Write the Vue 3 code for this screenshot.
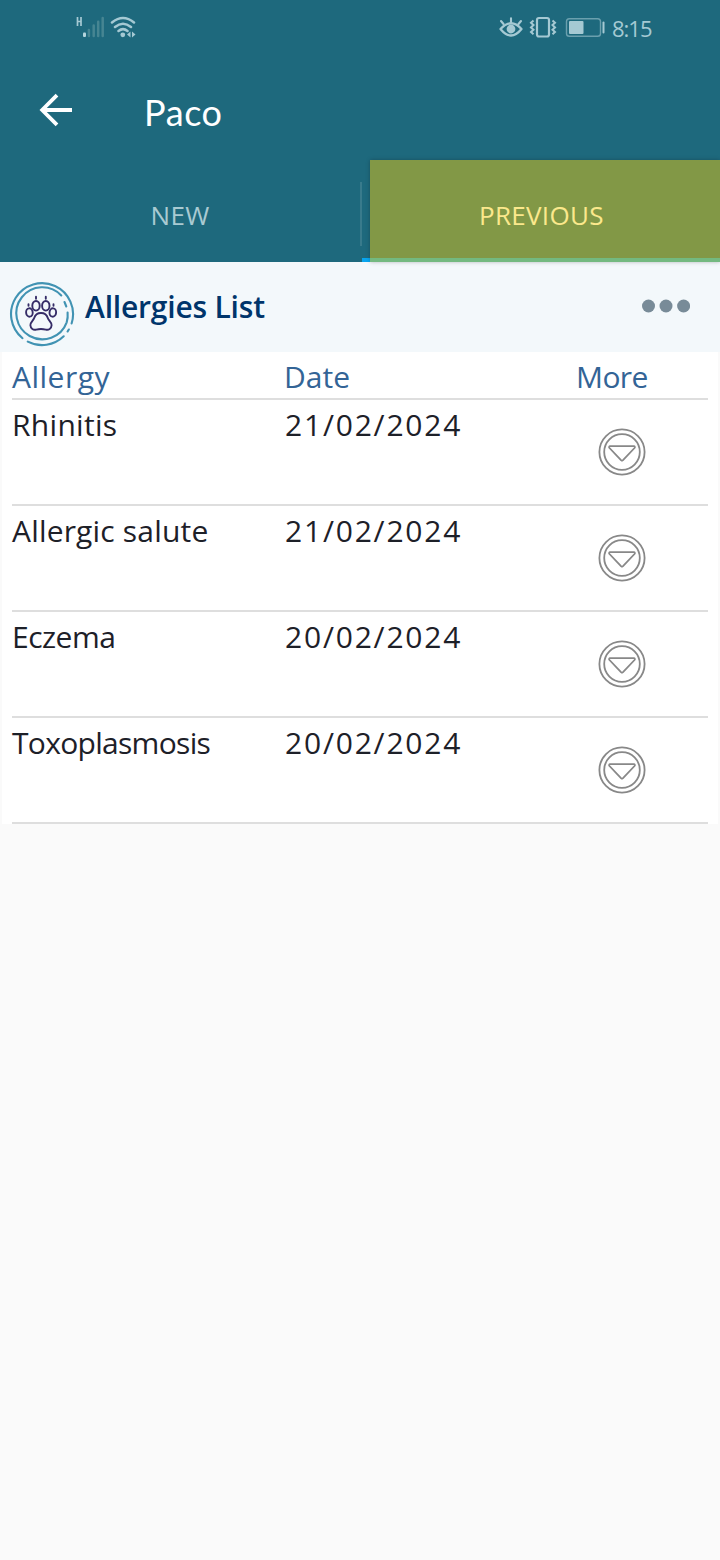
<script setup>
const rows = [
  { name: 'Rhinitis', date: '21/02/2024', cls: 'n1' },
  { name: 'Allergic salute', date: '21/02/2024', cls: 'n2' },
  { name: 'Eczema', date: '20/02/2024', cls: 'n3' },
  { name: 'Toxoplasmosis', date: '20/02/2024', cls: 'n4' },
]
</script>

<template>
  <div class="screen">
    <header class="top">
      <div class="status">
        <svg class="net" width="64" height="30" viewBox="0 0 64 30" fill="none">
          <path d="M2.500 4v9M6 4v9M2.500 8.500h3.500" stroke="#a5c9d3" stroke-width="1.700" />
          <rect x="8" y="19.500" width="3" height="4.500" rx="1" fill="#b5d5dd" />
          <path d="M13.900 23v-6M18.700 23v-10.500M23.200 23V8.800M27.700 23V5" stroke="#468592" stroke-width="2.500" stroke-linecap="round" />
          <path d="M37 9.500Q48 0.500 59 9.500M40 14Q48 7.500 56 14M43.500 18Q48 14.300 52.500 18" stroke="#a5c9d3" stroke-width="2.500" stroke-linecap="round" />
          <circle cx="47.800" cy="21.800" r="2.400" fill="#a5c9d3" />
          <path d="M52 21.500l3.500-3v6zM60.500 21.500l-3.500-3v6z" fill="#a5c9d3" />
        </svg>
        <span class="gap"></span>
        <svg class="sys" width="106" height="30" viewBox="0 0 106 30" fill="none" stroke="#a5c9d3">
          <path d="M1.500 16Q12 4.500 22.500 16Q12 29 1.500 16z" stroke-width="2.300" stroke-linejoin="round" />
          <circle cx="12" cy="16" r="4.400" fill="#a5c9d3" stroke="none" />
          <path d="M12 9V5.200M4.500 11L2 8M19.500 11L22 8" stroke-width="2.100" stroke-linecap="round" />
          <rect x="38" y="5" width="12" height="18.500" rx="2" stroke-width="2.200" />
          <path d="M34.500 7.500l-2.500 2.300 2.500 2.300-2.500 2.300 2.500 2.300-2.500 2.300 2.500 2.300M53.500 7.500l2.500 2.300-2.500 2.300 2.500 2.300-2.500 2.300 2.500 2.300-2.500 2.300" stroke-width="2" />
          <rect x="67.500" y="5.800" width="34" height="17.500" rx="2.800" stroke="#6ba0ae" stroke-width="1.400" />
          <rect x="70" y="8" width="14.500" height="13" rx="1" fill="#a5c9d3" stroke="none" />
          <path d="M104.500 9.500v10" stroke-width="2" stroke-linecap="round" />
        </svg>
        <span class="clock">8:15</span>
      </div>
      <div class="bar">
        <svg class="back" width="34" height="34" viewBox="0 0 34 34" fill="none" stroke="#fff" stroke-width="3.800">
          <path d="M33 17H4M18 2.200L3.200 17L18 31.800" />
        </svg>
        <span class="title">Paco</span>
      </div>
      <nav class="tabs">
        <div class="tab new"><span>NEW</span></div>
        <i class="divider"></i>
        <i class="stub"></i>
        <div class="tab previous"><span>PREVIOUS</span></div>
      </nav>
    </header>

    <section class="heading">
      <svg class="paw" width="66" height="66" viewBox="0 0 66 66" fill="none" stroke-linecap="round">
        <g stroke="#4193b3" stroke-width="2.100">
          <path d="M13.500 57.200A31 31 0 1 1 62.600 42.500M59.800 48.500L58.600 50.500M54.700 55.300A31 31 0 0 1 18.800 60.600" />
          <path d="M52.300 14.500A26 26 0 1 0 57.700 41.300A26 26 0 0 0 58.600 31.500M55.500 21L57.300 25.500" />
        </g>
        <g stroke="#352c67" stroke-width="1.900">
          <ellipse cx="27" cy="24.800" rx="3.700" ry="4.800" />
          <ellipse cx="36.800" cy="24.800" rx="3.700" ry="4.800" />
          <ellipse cx="20.400" cy="31.500" rx="3.300" ry="4.200" transform="rotate(-6 20.400 31.500)" />
          <ellipse cx="43.800" cy="31.500" rx="3.300" ry="4.200" transform="rotate(6 43.800 31.500)" />
          <path d="M27 17.700v-1.900M36.800 17.700v-1.900M19.500 24.700v-1.500M44.500 24.700v-1.500" />
          <path d="M32 32c4 0 6 2.300 6.800 5c.6 2.200 4 4 3.800 7.300c-.2 3.500-3 5-5.800 4.300c-3-.8-6.600-.8-9.600 0c-2.800.7-5.600-.8-5.800-4.300c-.2-3.300 3.200-5.100 3.800-7.300c.8-2.700 2.800-5 6.800-5z" />
        </g>
      </svg>
      <h1>Allergies List</h1>
      <span class="gap"></span>
      <svg class="dots" width="48" height="14" viewBox="0 0 48 14" fill="#788b98">
        <circle cx="6.500" cy="7" r="6.500" /><circle cx="24" cy="7" r="6.500" /><circle cx="41.600" cy="7" r="6.500" />
      </svg>
    </section>

    <main class="table">
      <div class="row head">
        <span class="c1">Allergy</span><span>Date</span><span class="c3">More</span>
      </div>
      <div v-for="r in rows" :key="r.name" class="row item">
        <span :class="r.cls">{{ r.name }}</span>
        <span class="date">{{ r.date }}</span>
        <svg class="more" width="48" height="48" viewBox="0 0 48 48" fill="none" stroke="#888" stroke-width="1.800">
          <circle cx="24" cy="24" r="22.600" /><circle cx="24" cy="24" r="17.800" />
          <path d="M12 18.200H36Q37.500 18.700 36.500 20L25 32.200Q24 33.200 23 32.200L11.500 20Q10.500 18.700 12 18.200z" />
        </svg>
      </div>
    </main>
  </div>
</template>

<style>
body { background: #fafafa; }
</style>
<style scoped>
.screen { width: 720px; height: 1560px; background: #fafafa; font-family: "Open Sans", sans-serif; overflow: hidden; }
.top { height: 262px; background: #1e697d; display: flex; flex-direction: column; }
.status { height: 56px; display: flex; align-items: flex-start; }
.gap { flex: 1; }
.net { margin: 13px 0 0 75px; }
.sys { margin-top: 13px; }
.clock { width: 115px; padding-left: 7px; box-sizing: border-box; margin-top: 13px; line-height: 30px; font-size: 22px; letter-spacing: -1px; color: #a5c9d3; }
.bar { height: 104px; display: flex; }
.back { margin: 37px 0 0 39px; }
.title { margin: 30px 0 0 71px; line-height: 52px; font-family: Lato, sans-serif; font-size: 36px; letter-spacing: 0.6px; color: #fff; }
.tabs { height: 102px; display: flex; }
.tab span { font-size: 26px; line-height: 34px; white-space: nowrap; letter-spacing: 0.3px; }
.new { width: 360px; display: flex; justify-content: center; padding-top: 38px; box-sizing: border-box; color: #a9cad2; }
.divider { width: 2px; height: 64px; margin-top: 22px; background: #397b8c; }
.stub { width: 8px; height: 4px; margin-top: 98px; background: #08a5ef; }
.previous { width: 350px; box-sizing: border-box; padding: 38px 0 0 109px; background: #829846; border-bottom: 4px solid #73b980; color: #fbe88c; box-shadow: 0 0 4px rgba(0, 0, 0, 0.25); }
.heading { height: 90px; background: #f3f8fb; display: flex; align-items: flex-start; }
.paw { margin: 19px 0 0 9px; }
h1 { margin: 24px 0 0 10px; font-size: 30px; line-height: 42px; font-weight: 600; color: #00356b; white-space: nowrap; letter-spacing: -0.2px; }
.dots { margin: 37px 30px 0 0; }
.table { margin: 0 2px; padding: 0 10px; background: #fff; }
.row { display: grid; grid-template-columns: 272px 273px 1fr; border-bottom: 2px solid #dedede; font-size: 30px; color: #1d2028; }
.row span { line-height: 42px; white-space: nowrap; }
.head { height: 42px; padding-top: 4px; color: #336496; }
.c1 { letter-spacing: 0.5px; }
.c3 { margin-left: 19px; letter-spacing: -0.6px; }
.item { height: 104px; }
.item span { padding-top: 4px; }
.n1 { letter-spacing: 0.3px; }
.n2 { letter-spacing: 0.18px; }
.n3 { letter-spacing: -0.5px; }
.n4 { letter-spacing: -0.7px; }
.item .date { padding-left: 1px; letter-spacing: 1.8px; }
.more { margin: 28px 0 0 41px; }
</style>
